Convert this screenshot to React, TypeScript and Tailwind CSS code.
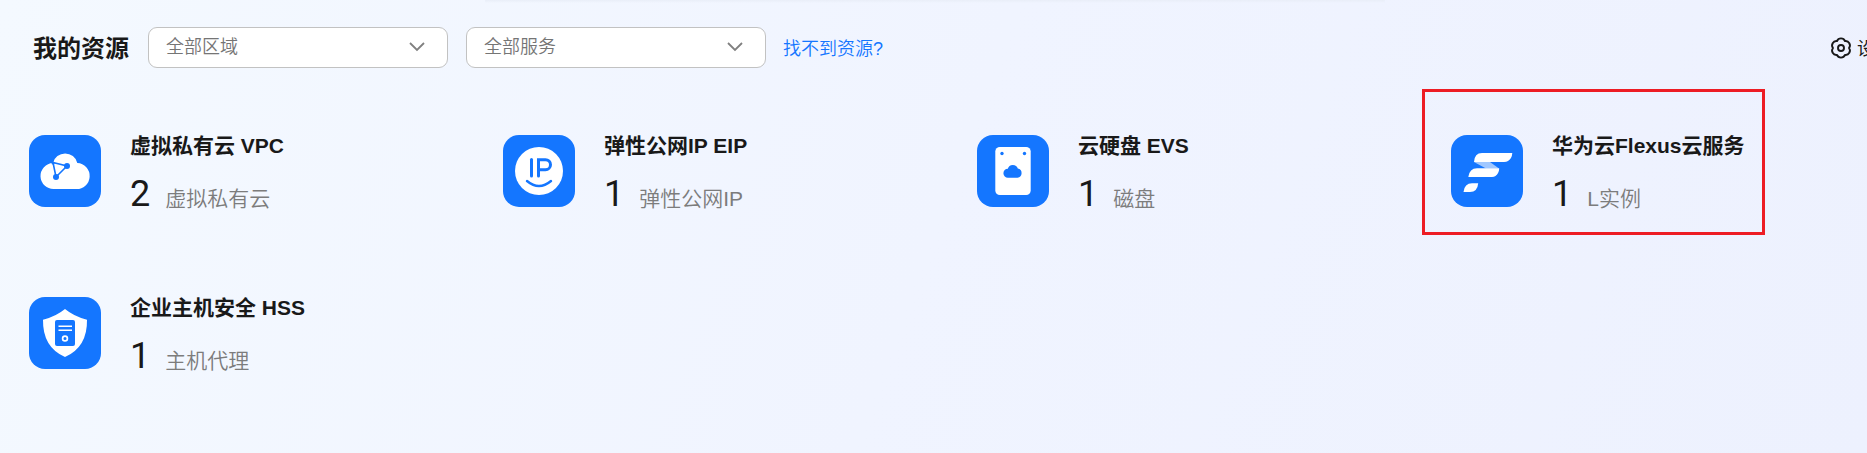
import type { ReactNode } from "react";

type Resource = { title: string; count: number; label: string; icon: ReactNode; highlighted?: boolean };

const VpcIcon = () => (
  <svg viewBox="0 0 72 72" className="h-full w-full">
    <path d="M25 54a13 13 0 0 1-1-26A12.500 12.500 0 0 1 48.300 28A13 13 0 0 1 47 54Z" fill="#fff" />
    <path d="M24 27.500L38 31L27 42Z" fill="none" stroke="#1476ff" strokeWidth="1.600" />
    <circle cx="24" cy="28" r="1.500" fill="#1476ff" />
    <circle cx="38" cy="31" r="3" fill="#1476ff" />
    <circle cx="27" cy="42" r="3" fill="#1476ff" />
  </svg>
);

const EipIcon = () => (
  <svg viewBox="0 0 72 72" className="h-full w-full">
    <circle cx="36" cy="36" r="24" fill="#fff" />
    <g fill="none" stroke="#1476ff" strokeWidth="3" strokeLinecap="round">
      <path d="M28.500 24.500V41" />
      <path d="M35.500 41V24.700H42.500a5 5 0 0 1 0 10H35.500" />
      <path d="M24 46Q36 56 48 46" strokeWidth="2.400" />
    </g>
  </svg>
);

const EvsIcon = () => (
  <svg viewBox="0 0 72 72" className="h-full w-full">
    <rect x="18.300" y="12" width="35.400" height="48" rx="4.500" fill="#fff" />
    <circle cx="25" cy="18.500" r="1.700" fill="#1476ff" />
    <circle cx="47.500" cy="18.500" r="1.700" fill="#1476ff" />
    <path d="M31 42.700a4.500 4.500 0 0 1-.200-9A5.200 5.200 0 0 1 40.800 33.600A4.600 4.600 0 0 1 40.500 42.700Z" fill="#1476ff" />
  </svg>
);

const FlexusIcon = () => (
  <svg viewBox="0 0 72 72" className="h-full w-full">
    <path d="M23 27H39L48 33.500H35Z" fill="#a1c8ff" />
    <path d="M23 27Q23.500 18 31 18H61.300Q61 23.500 57 26Q55.500 27 53 27Z" fill="#fff" />
    <path d="M17.300 42Q18.500 33.300 26 33.300H48.200Q48 38.500 44.500 41Q43 42 41 42Z" fill="#fff" />
    <path d="M12.500 57Q13.500 48.300 21 48.300H27.200Q26.500 57 19 57Z" fill="#fff" />
  </svg>
);

const HssIcon = () => (
  <svg viewBox="0 0 72 72" className="h-full w-full">
    <path d="M36 12Q45 19.500 58 22.700Q58.500 50 36 60Q13.500 50 14 22.700Q27 19.500 36 12Z" fill="#fff" />
    <rect x="26" y="23" width="20" height="26" rx="2" fill="#1476ff" />
    <path d="M29.500 29.300H43M29.500 33.300H43" stroke="#fff" strokeWidth="1.500" />
    <circle cx="36" cy="41.500" r="2.400" fill="none" stroke="#fff" strokeWidth="1.700" />
  </svg>
);

const resources: Resource[] = [
  { title: "虚拟私有云 VPC", count: 2, label: "虚拟私有云", icon: <VpcIcon /> },
  { title: "弹性公网IP EIP", count: 1, label: "弹性公网IP", icon: <EipIcon /> },
  { title: "云硬盘 EVS", count: 1, label: "磁盘", icon: <EvsIcon /> },
  { title: "华为云Flexus云服务", count: 1, label: "L实例", icon: <FlexusIcon />, highlighted: true },
  { title: "企业主机安全 HSS", count: 1, label: "主机代理", icon: <HssIcon /> },
];

function Select({ text }: { text: string }) {
  return (
    <button className="flex h-[41px] w-[300px] items-center justify-between rounded-[9px] border border-[#c2c2c2] bg-white pr-[22px] pb-[1px] pl-[17px] text-[18px] font-[350] text-[#757575]">
      {text}
      <svg viewBox="0 0 16 10" className="h-[10px] w-4" fill="none" stroke="#808080" strokeWidth="1.800">
        <path d="M1 1L8 8L15 1" />
      </svg>
    </button>
  );
}

function ResourceCard({ title, count, label, icon, highlighted }: Resource) {
  return (
    <div className="relative flex h-[72px] gap-[29px]">
      {highlighted && <div className="absolute -top-[46px] -left-[29px] h-[146px] w-[343px] border-[3px] border-[#ed1c24]" />}
      <div className="h-[72px] w-[72px] shrink-0 overflow-hidden rounded-[16px] bg-[#1476ff]">{icon}</div>
      <div className="flex flex-col whitespace-nowrap">
        <h2 className="-mt-[1px] h-6 text-[21px] leading-6 font-bold text-[#191919]">{title}</h2>
        <div className="mt-[16px] flex h-10 items-baseline gap-[15px]">
          <span className="font-[Roboto] text-[36px] leading-10 text-[#191919]">{count}</span>
          <span className="text-[21px] leading-6 font-[350] text-[#7c7c7c]">{label}</span>
        </div>
      </div>
    </div>
  );
}

export default function App() {
  return (
    <main className="h-[453px] w-full overflow-hidden bg-linear-[110deg] from-[#f4f9ff] via-[#f0f4ff] to-[#edf1fe] font-['Liberation_Sans','Noto_Sans_CJK_SC',sans-serif]">
      <div className="ml-[485px] h-[3px] w-[900px] bg-linear-to-b from-[#e9eef8] to-transparent" />
      <header className="mt-6 flex h-[41px] items-center pl-[33px] whitespace-nowrap">
        <h1 className="w-[115px] pt-[2px] text-[24px] font-bold text-[#191919]">我的资源</h1>
        <div className="flex gap-[18px]">
          <Select text="全部区域" />
          <Select text="全部服务" />
        </div>
        <a className="ml-[17px] pt-[3px] text-[18px] font-[350] text-[#1476ff]">找不到资源?</a>
        <button className="ml-auto -mr-[8px] flex items-center gap-[5px] text-[18px] text-[#191919]">
          <svg viewBox="0 0 22 22" className="h-[22px] w-[22px]" fill="none" stroke="#191919" strokeWidth="1.900" strokeLinejoin="round">
            <path d="M19 11A4.300 4.300 0 0 1 15 17.900A4.300 4.300 0 0 1 7 17.900A4.300 4.300 0 0 1 3 11A4.300 4.300 0 0 1 7 4.100A4.300 4.300 0 0 1 15 4.100A4.300 4.300 0 0 1 19 11Z" />
            <circle cx="11" cy="11" r="3" />
          </svg>
          <span className="pt-[3px]">设</span>
        </button>
      </header>
      <section className="mt-[67px] grid grid-cols-[repeat(4,474px)] gap-y-[90px] pl-[29px]">
        {resources.map((resource) => (
          <ResourceCard key={resource.title} {...resource} />
        ))}
      </section>
    </main>
  );
}
